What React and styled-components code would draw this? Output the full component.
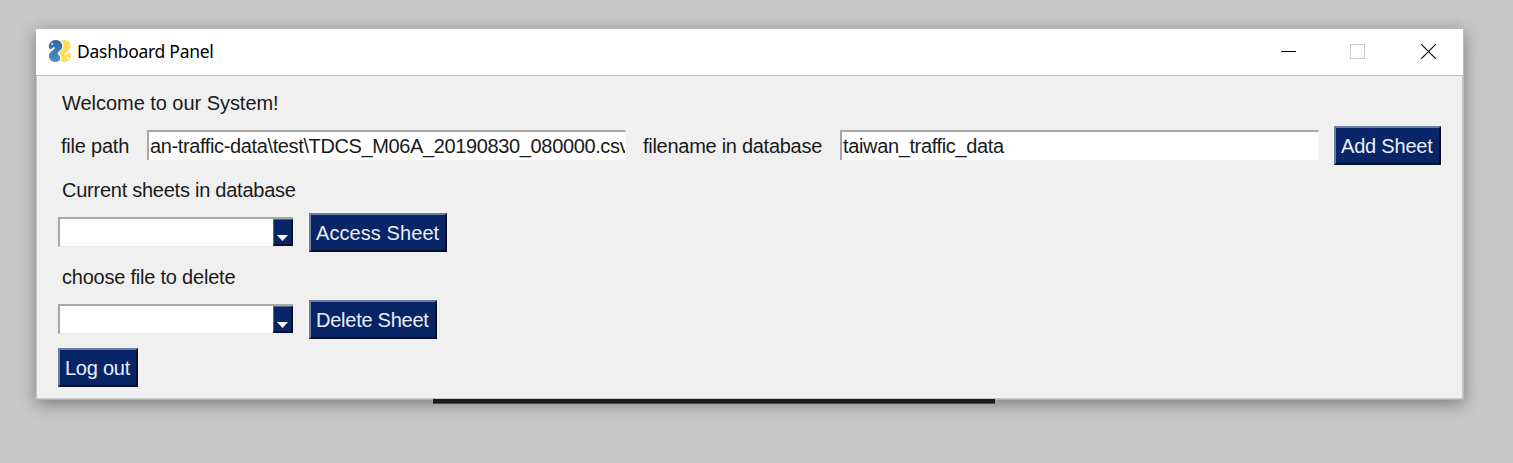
import React from 'react';
import styled, { createGlobalStyle } from 'styled-components';

const GlobalStyle = createGlobalStyle`
  * { box-sizing: border-box; }
  body { margin: 0; background: #c8c8c8; overflow: hidden; }
`;

const Desktop = styled.main`
  width: 1513px;
  height: 463px;
  padding: 28px 0 0 36px;
  background: #c8c8c8;
  font-family: "Liberation Sans", Arial, sans-serif;
`;

const Window = styled.section`
  display: flex;
  flex-direction: column;
  width: 1428px;
  height: 372px;
  background: #f0f0f0;
  border: solid;
  border-width: 1px 1px 1px 0;
  border-color: #b8b8b8 #bcbcbc #b4b4b4;
  box-shadow: 0 4px 16px rgba(0, 0, 0, 0.38);
`;

const TitleBar = styled.header`
  display: flex;
  align-items: center;
  height: 47px;
  padding: 0 0 2px 12px;
  background: #fff;
  border-bottom: 1px solid #c0c0c0;
`;

const Title = styled.h1`
  flex: 1;
  margin: -1px 0 0 5px;
  font: 400 17.5px/24px "Noto Sans", "Open Sans", sans-serif;
  letter-spacing: -0.28px;
  color: #000;
`;

const WindowControls = styled.div`
  display: flex;
  gap: 54px;
  margin-right: 27px;

  svg:last-child { margin-left: 2px; }
`;

const Content = styled.div`
  display: flex;
  flex: 1;
  flex-direction: column;
  align-items: flex-start;
  padding: 15px 0 0 21px;
  border: solid #c6c6c6;
  border-width: 0 1px 1px 1px;
`;

const Text = styled.span`
  font-size: 20px;
  line-height: 24px;
  letter-spacing: ${(p) => p.$spacing || 0}px;
  white-space: pre;
  color: #1a1a1a;
`;

const Heading = styled(Text)`
  height: 24px;
  padding-left: 4px;
`;

const Row = styled.div`
  display: flex;
  align-items: center;
  height: 39px;
  margin: 11px 0 ${(p) => (p.$last ? 9 : 13)}px;
`;

const FieldLabel = styled(Text)`
  width: ${(p) => p.$width}px;
  padding-left: ${(p) => p.$indent}px;
`;

const Entry = styled.div`
  width: 479px;
  height: 30px;
  margin: 0 0 1px;
  padding: 2px 0 0 1px;
  overflow: hidden;
  background: #fff;
  border: solid #a8a8a8;
  border-width: 2px 1px 0 2px;
  border-right-color: #f8f8f8;
`;

const Button = styled.button`
  width: ${(p) => p.$width}px;
  height: 39px;
  margin: 0 0 0 ${(p) => p.$gap || 0}px;
  padding: 0 0 0 5px;
  text-align: left;
  white-space: nowrap;
  font: 20px/24px "Liberation Sans", Arial, sans-serif;
  letter-spacing: ${(p) => p.$spacing || 0}px;
  color: #e9eef5;
  background: #082567;
  border: 2px solid;
  border-color: #6b7ca5 #0a1024 #0a1024 #6b7ca5;
`;

const Combo = styled.div`
  display: flex;
  justify-content: flex-end;
  width: 235px;
  height: 30px;
  margin-bottom: 1px;
  background: #fff;
  border: solid #a8a8a8;
  border-width: 2px 0 0 2px;
  border-bottom: 1px solid #e8e8e8;
`;

const ComboArrow = styled.span`
  display: flex;
  align-items: flex-end;
  justify-content: center;
  width: 20px;
  height: 27px;
  padding-bottom: 3px;
  background: #082567;
  border: solid;
  border-width: 1px 2px 2px 1px;
  border-color: #52668f #0a1024 #0a1024 #52668f;
`;

const Taskbar = styled.div`
  width: 562px;
  height: 5px;
  margin-left: 397px;
  margin-top: -1px;
  position: relative;
  background: #1a1a1a;
  border-bottom: 1px solid #4c4c4c;
`;

function PythonLogo() {
  return (
    <svg width="24" height="24" viewBox="0 0 24 24">
      <defs>
        <linearGradient id="snakeBlue" x1="0" y1="0" x2="0" y2="1">
          <stop offset="0" stopColor="#326b9c" />
          <stop offset="1" stopColor="#4b8fc5" />
        </linearGradient>
      </defs>
      <path d="M3.8 2.2C6 .4 9.4.5 11.8 2.2C14.8 4.6 15.2 8.2 12.8 10.7L10.2 13.2C9.4 14.2 9.7 15 10.8 16C12.7 18 12.7 20.4 10.8 22C8.6 23.6 5 23.3 2.8 21.2C.4 18.8.4 15.2 2.6 13L6.8 9.4C7.2 8.3 6.2 7.8 5 8.6L3 10.2C1.4 10.3.6 8.8.8 6.8C1 4.8 2.2 3.2 3.8 2.2Z" fill="url(#snakeBlue)" />
      <path d="M13 2C15 .3 18.6.6 20.8 2.8C23.4 5.2 23.4 8.8 21 11L16.9 14.6C16.5 15.7 17.6 16.2 18.8 15.4L21 13.8C22.5 13.8 23.4 15.3 23 17.4C22.8 19.4 21.6 20.9 20 21.8C17.6 23.5 14.3 23.3 12.2 21.5C13.9 19.8 14 17.5 12.2 15.5C11.2 14.5 11.2 13.6 12 12.8L14 10.8C16.4 8.3 16.3 5.2 13.6 2.8Z" fill="#ffdc58" />
      <circle cx="4.2" cy="5" r=".9" fill="#fff" />
      <circle cx="19.7" cy="19" r=".9" fill="#fff" />
    </svg>
  );
}

function ControlIcon({ kind }) {
  return (
    <svg width="15" height="15" viewBox="0 0 15 15" fill="none">
      {kind === 'minimize' && <path d="M0 7.5H15" stroke="#000" />}
      {kind === 'maximize' && <rect x=".5" y=".5" width="14" height="14" stroke="#ccc" />}
      {kind === 'close' && <path d="M.2.2L14.8 14.8M14.8.2L.2 14.8" stroke="#000" strokeWidth="1.1" />}
    </svg>
  );
}

function Dropdown() {
  return (
    <Combo>
      <ComboArrow>
        <svg width="11" height="6" viewBox="0 0 11 6">
          <path d="M0 0H11L5.5 6Z" fill="#fff" />
        </svg>
      </ComboArrow>
    </Combo>
  );
}

export default function App() {
  return (
    <Desktop>
      <GlobalStyle />
      <Window>
        <TitleBar>
          <PythonLogo />
          <Title>Dashboard Panel</Title>
          <WindowControls>
            <ControlIcon kind="minimize" />
            <ControlIcon kind="maximize" />
            <ControlIcon kind="close" />
          </WindowControls>
        </TitleBar>
        <Content>
          <Heading $spacing={-0.04}>Welcome to our System!</Heading>
          <Row>
            <FieldLabel $width={89} $indent={3} $spacing={-0.22}>file path</FieldLabel>
            <Entry><Text $spacing={-0.37}>{'an-traffic-data\\test\\TDCS_M06A_20190830_080000.csv'}</Text></Entry>
            <FieldLabel $width={214} $indent={17} $spacing={-0.28}>filename in database</FieldLabel>
            <Entry><Text $spacing={-0.36}>taiwan_traffic_data</Text></Entry>
            <Button $width={107} $gap={15} $spacing={-0.2}>Add Sheet</Button>
          </Row>
          <Heading $spacing={-0.25}>Current sheets in database</Heading>
          <Row>
            <Dropdown />
            <Button $width={138} $gap={16} $spacing={0.08}>Access Sheet</Button>
          </Row>
          <Heading $spacing={-0.22}>choose file to delete</Heading>
          <Row $last>
            <Dropdown />
            <Button $width={128} $gap={16} $spacing={-0.25}>Delete Sheet</Button>
          </Row>
          <Button $width={80} $spacing={-0.25}>Log out</Button>
        </Content>
      </Window>
      <Taskbar />
    </Desktop>
  );
}
